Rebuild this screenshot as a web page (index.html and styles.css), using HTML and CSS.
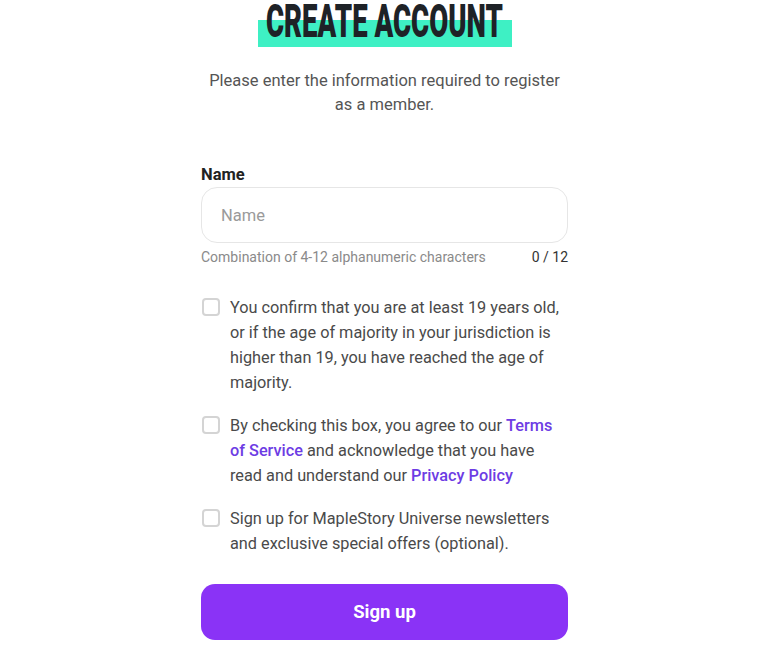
FILE: index.html
```html
<!DOCTYPE html>
<html lang="en">
<head>
    <meta charset="UTF-8">
    <meta name="viewport" content="width=device-width, initial-scale=1.0">
    <title>Create Account</title>
    <link rel="stylesheet" href="styles.css">
</head>
<body>
<div class="signup">
    <div class="title-wrap">
        <h1 class="title-mark"><span class="title-text">CREATE ACCOUNT</span></h1>
    </div>
    <p class="intro">Please enter the information required to register as a member.</p>

    <form class="signup-form" onsubmit="return false">
        <label class="field-label" for="name">Name</label>
        <input type="text" id="name" class="field-input" placeholder="Name" maxlength="12">
        <div class="field-help">
            <span>Combination of 4-12 alphanumeric characters</span>
            <span class="counter">0 / 12</span>
        </div>

        <!-- Agreement checkboxes -->
        <label class="check">
            <input type="checkbox">
            <span class="box"></span>
            <span class="check-text">You confirm that you are at least 19 years old, or if the age of majority in your jurisdiction is higher than 19, you have reached the age of majority.</span>
        </label>
        <label class="check">
            <input type="checkbox">
            <span class="box"></span>
            <span class="check-text">By checking this box, you agree to our <a href="#">Terms of Service</a> and acknowledge that you have read and understand our <a href="#">Privacy Policy</a></span>
        </label>
        <label class="check">
            <input type="checkbox">
            <span class="box"></span>
            <span class="check-text">Sign up for MapleStory Universe newsletters and exclusive special offers (optional).</span>
        </label>

        <button type="submit" class="submit">Sign up</button>
    </form>
</div>
</body>
</html>
```

FILE: styles.css
```css
body {
    font-family: 'Roboto', 'Liberation Sans', sans-serif;
    background-color: #fff;
    color: #444;
    margin: 0;
}

.signup {
    width: 367px;
    margin: 0 auto;
}

.title-wrap {
    display: flex;
    justify-content: center;
}

.title-mark {
    display: flex;
    justify-content: center;
    width: 254px;
    height: 47px;
    margin: 0;
    background: linear-gradient(to bottom, transparent 20px, #3ef0c4 20px);
}

.title-text {
    flex: none;
    font-size: 46px;
    line-height: 42px;
    font-weight: 900;
    color: #1e2227;
    white-space: nowrap;
    transform: scaleX(0.6);
}

.intro {
    margin: 22px 0 0;
    font-size: 16.5px;
    line-height: 24px;
    color: #555;
    text-align: center;
}

.signup-form {
    display: flex;
    flex-direction: column;
    margin-top: 47px;
}

.field-label {
    font-size: 16.5px;
    line-height: 21px;
    font-weight: 700;
    color: #222;
    margin-bottom: 2px;
}

.field-input {
    box-sizing: border-box;
    height: 56px;
    padding: 0 19px;
    border: 1px solid #e6e6e6;
    border-radius: 16px;
    font-family: inherit;
    font-size: 16.5px;
    color: #222;
}

.field-input::placeholder {
    color: #9a9a9a;
}

.field-input:focus {
    border-color: #8a33f6;
    outline: none;
}

.field-help {
    display: flex;
    justify-content: space-between;
    margin-top: 5px;
    font-size: 14px;
    line-height: 18px;
    color: #8a8a8a;
}

.counter {
    color: #333;
}

.check {
    display: flex;
    align-items: flex-start;
    gap: 10px;
    margin-top: 18px;
    font-size: 16.3px;
    line-height: 25px;
    color: #4a4a4a;
    cursor: pointer;
}

.field-help + .check {
    margin-top: 29px;
}

.check input {
    display: none;
}

.box {
    flex: none;
    box-sizing: border-box;
    width: 18px;
    height: 18px;
    margin: 3px 0 0 1px;
    border: 2px solid #d4d4d4;
    border-radius: 4px;
}

.check input:checked + .box {
    background-color: #8a33f6;
    border-color: #8a33f6;
}

.check-text a {
    color: #6d3ce4;
    font-weight: 500;
    text-decoration: none;
}

.submit {
    height: 56px;
    margin-top: 28px;
    border: none;
    border-radius: 14px;
    background-color: #8a33f6;
    color: #fff;
    font-family: inherit;
    font-size: 18.5px;
    font-weight: 700;
    cursor: pointer;
}

.submit:hover {
    background-color: #7a22e6;
}
```
